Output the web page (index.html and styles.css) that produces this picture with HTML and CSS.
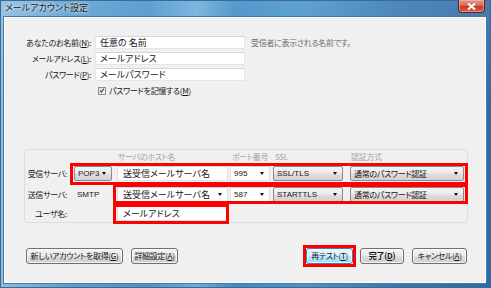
FILE: index.html
```html
<!DOCTYPE html>
<html lang="ja">
<head>
<meta charset="utf-8">
<title>メールアカウント設定</title>
<link rel="stylesheet" href="styles.css">
</head>
<body>
<div class="window">
  <div class="titlebar">
    <span class="title">メールアカウント設定</span>
    <div class="close"><svg width="9" height="7" viewBox="0 0 9 7"><path d="M1 0.5 L8 6.5 M8 0.5 L1 6.5" stroke="#fff" stroke-width="2"/></svg></div>
  </div>
  <div class="client">
    <div class="top">
      <label class="lbl">あなたのお名前(<u>N</u>):</label>
      <div class="field">任意の 名前</div>
      <div class="hint">受信者に表示される名前です。</div>
      <label class="lbl">メールアドレス(<u>L</u>):</label>
      <div class="field">メールアドレス</div>
      <div></div>
      <label class="lbl">パスワード(<u>P</u>):</label>
      <div class="field">メールパスワード</div>
      <div></div>
      <div></div>
      <div class="check">
        <span class="box"><svg width="7" height="7" viewBox="0 0 8 8"><path d="M1.5 4 L3.3 6 L6.6 1.6" fill="none" stroke="#2b4f86" stroke-width="1.5"/></svg></span>
        <span>パスワードを記憶する(<u>M</u>)</span>
      </div>
    </div>

    <div class="group">
      <div class="colh k3 r0 host-h">サーバのホスト名</div>
      <div class="colh k4 r0">ポート番号</div>
      <div class="colh k5 r0">SSL</div>
      <div class="colh k6 r0 auth-h">認証方式</div>

      <div class="rlbl k1 r1">受信サーバ:</div>
      <div class="cell k2 r1 c-proto"><div class="dd btn lat w-proto">POP3<span class="arrow"></span></div></div>
      <div class="cell k3 r1 c-host"><div class="field2">送受信メールサーバ名</div></div>
      <div class="cell k4 r1 c-port"><div class="dd edit lat w-port">995<span class="arrow"></span></div></div>
      <div class="cell k5 r1 c-ssl"><div class="dd btn lat w-ssl">SSL/TLS<span class="arrow"></span></div></div>
      <div class="cell k6 r1 c-auth"><div class="dd btn w-auth">通常のパスワード認証<span class="arrow"></span></div></div>

      <div class="rlbl k1 r2">送信サーバ:</div>
      <div class="cell k2 r2 c-proto"><span class="lat smtp">SMTP</span></div>
      <div class="cell k3 r2 c-host"><div class="dd edit big w-host">送受信メールサーバ名<span class="arrow"></span></div></div>
      <div class="cell k4 r2 c-port"><div class="dd edit lat w-port">587<span class="arrow"></span></div></div>
      <div class="cell k5 r2 c-ssl"><div class="dd btn lat w-ssl">STARTTLS<span class="arrow"></span></div></div>
      <div class="cell k6 r2 c-auth"><div class="dd btn w-auth">通常のパスワード認証<span class="arrow"></span></div></div>

      <div class="rlbl k1 r3">ユーザ名:</div>
      <div class="cell k3 r3 c-host"><div class="field2">メールアドレス</div></div>

      <div class="hl hl1"></div>
      <div class="hl hl2"></div>
      <div class="hl hl3"></div>
    </div>

    <div class="buttons">
      <div class="bgroup">
        <div class="button w-new">新しいアカウントを取得(<u>G</u>)</div>
        <div class="button w-adv">詳細設定(<u>A</u>)</div>
      </div>
      <div class="bgroup right">
        <div class="mark"><div class="button w-retest focus">再テスト(<u>T</u>)</div></div>
        <div class="button w-done bold">完了(<u>D</u>)</div>
        <div class="button w-cancel">キャンセル(<u>A</u>)</div>
      </div>
    </div>
  </div>
</div>
</body>
</html>
```

FILE: styles.css
```css
* { box-sizing: border-box; }

html, body { margin: 0; padding: 0; }

body {
  font-family: "Noto Sans CJK JP", "Noto Sans", sans-serif;
  font-size: 8px;
  letter-spacing: -0.3px;
  font-feature-settings: "palt";
  color: #161616;
  background: #fff;
}

u { text-decoration: underline; text-underline-offset: 1px; }

.window {
  width: 491px;
  height: 288px;
  display: flex;
  flex-direction: column;
  padding: 0 5px 5px 4px;
  background:
    linear-gradient(to bottom, rgba(255,255,255,0.12), rgba(255,255,255,0) 40%),
    linear-gradient(to right, #8bbde0 0%, #5d9fd0 14%, #4a93cb 30%, #6aaedb 40%, #3f8cc6 48%, #4a95cc 62%, #3779b4 80%, #2d6aa6 100%);
  box-shadow: inset 0 0 0 1px #3d6a92;
}

.titlebar {
  height: 17px;
  display: flex;
  align-items: flex-start;
}

.title {
  padding-left: 1px;
  margin-top: 2px;
  font-size: 9px;
  letter-spacing: 0;
  line-height: 12px;
  color: #1a1a1a;
  text-shadow: 0 0 3px rgba(255,255,255,0.9), 0 0 5px rgba(255,255,255,0.6);
}

.close {
  margin-left: auto;
  margin-right: 1px;
  width: 27px;
  height: 13px;
  border: 1px solid #6b2320;
  border-top: none;
  border-radius: 0 0 4px 4px;
  background: linear-gradient(to bottom, #e49a8c 0%, #d66a58 45%, #c33a24 50%, #d5624a 100%);
  box-shadow: inset 0 0 0 1px rgba(255,200,190,0.45);
  display: flex;
  align-items: center;
  justify-content: center;
}

.client {
  flex: 1;
  background: #f0f0f0;
  border: 1px solid #fbfdff;
  box-shadow: 0 0 0 1px #4b79a3;
  display: flex;
  flex-direction: column;
}

/* top form */
.top {
  margin-top: 18px;
  display: grid;
  grid-template-columns: 86px 150px 1fr;
  grid-auto-rows: 13px;
  column-gap: 4px;
  row-gap: 3px;
}

.lbl {
  text-align: right;
  line-height: 13px;
  white-space: nowrap;
}

.field {
  height: 13px;
  background: #fff;
  border: 1px solid #e3e5ea;
  border-top-color: #d4d6db;
  padding-left: 4px;
  font-size: 9px;
  letter-spacing: 0;
  line-height: 11px;
  white-space: nowrap;
  overflow: hidden;
}

.hint {
  padding-left: 2px;
  line-height: 13px;
  color: #6d6d6d;
  white-space: nowrap;
}

.check {
  display: flex;
  align-items: center;
  gap: 3px;
  padding-left: 3px;
  line-height: 13px;
  white-space: nowrap;
}

.box {
  width: 8px;
  height: 8px;
  border: 1px solid #8e8f8f;
  background: linear-gradient(135deg, #dcdcdc, #fdfdfd);
  display: flex;
  align-items: center;
  justify-content: center;
}

/* server group */
.group {
  margin: 52px 0 0 19px;
  width: 444px;
  height: 74px;
  border: 1px solid #d5dfe5;
  border-radius: 3px;
  display: grid;
  grid-template-columns: 45px 44px 115px 43px 74px 121px;
  grid-template-rows: 13px 21px 20px 18px;
}

.k1 { grid-column: 1; }
.k2 { grid-column: 2; }
.k3 { grid-column: 3; }
.k4 { grid-column: 4; }
.k5 { grid-column: 5; }
.k6 { grid-column: 6; }
.r0 { grid-row: 1; }
.r1 { grid-row: 2; }
.r2 { grid-row: 3; }
.r3 { grid-row: 4; }

.colh {
  color: #a3a3a3;
  line-height: 13px;
  padding-left: 3px;
  white-space: nowrap;
}
.host-h { padding-left: 4px; }
.auth-h { padding-left: 5px; }

.rlbl {
  padding-right: 3px;
  display: flex;
  align-items: center;
  justify-content: flex-end;
  white-space: nowrap;
}

.cell {
  display: flex;
  align-items: center;
}
.c-proto { padding-left: 4px; }
.c-host { padding-left: 3px; }
.c-port { padding-left: 1px; }
.c-ssl { padding-left: 1px; }
.c-auth { padding-left: 4px; }

.lat {
  font-family: "Liberation Sans", Arial, sans-serif;
  font-size: 8px;
  letter-spacing: 0;
}

.smtp { padding-left: 3px; }

.dd {
  height: 15px;
  display: flex;
  align-items: center;
  padding-left: 3px;
  padding-right: 5px;
  white-space: nowrap;
  border-radius: 2px;
}
.dd.btn {
  border: 1px solid #8a8a8a;
  background: linear-gradient(to bottom, #f3f3f3 0%, #ececec 48%, #dedede 52%, #d2d2d2 100%);
}
.dd.edit {
  border: 1px solid #dde0e5;
  border-top-color: #cfd2d8;
  background: #fff;
  border-radius: 0;
}
.dd.big { font-size: 9px; letter-spacing: 0; padding-left: 5px; }

.arrow {
  margin-left: auto;
  width: 0;
  height: 0;
  border-left: 2.5px solid transparent;
  border-right: 2.5px solid transparent;
  border-top: 3px solid #111;
}

.w-proto { width: 38px; }
.w-host { width: 111px; }
.w-port { width: 40px; }
.w-ssl { width: 70px; }
.w-auth { width: 114px; }

.field2 {
  width: 111px;
  height: 15px;
  background: #fff;
  border: 1px solid #dde0e5;
  border-top-color: #cfd2d8;
  padding-left: 5px;
  font-size: 9px;
  letter-spacing: 0;
  line-height: 13px;
  white-space: nowrap;
}

.hl {
  border: 3px solid #ff0000;
  pointer-events: none;
  z-index: 2;
}
.hl1 { grid-column: 2 / 7; grid-row: 2; margin-right: -1px; margin-bottom: -1px; }
.hl2 { grid-column: 3 / 7; grid-row: 3; margin-left: -1px; margin-right: -1px; }
.hl3 { grid-column: 3; grid-row: 4; margin-left: -1px; margin-bottom: -2px; }

/* buttons */
.buttons {
  margin-top: 22px;
  display: flex;
  justify-content: space-between;
  align-items: center;
  padding: 0 18px 0 21px;
}

.bgroup { display: flex; gap: 8px; align-items: center; }
.bgroup.right { gap: 4px; }
.bgroup.right .w-cancel { margin-left: 4px; }

.mark {
  border: 3px solid #ff0000;
}

.button {
  height: 16px;
  border: 1px solid #707070;
  border-radius: 3px;
  background: linear-gradient(to bottom, #f2f2f2 0%, #ebebeb 48%, #dddddd 52%, #cfcfcf 100%);
  box-shadow: inset 0 0 0 1px rgba(255,255,255,0.7);
  display: flex;
  align-items: center;
  justify-content: center;
  white-space: nowrap;
  line-height: 12px;
}

.w-new { width: 97px; }
.w-adv { width: 47px; }
.w-retest { width: 47px; }
.w-done { width: 44px; }
.w-cancel { width: 55px; }

.focus {
  border-color: #3c7fb1;
  background: linear-gradient(to bottom, #eaf6fd 0%, #d9f0fc 48%, #bee6fd 52%, #a7d9f5 100%);
}

.bold { font-weight: bold; }
```
